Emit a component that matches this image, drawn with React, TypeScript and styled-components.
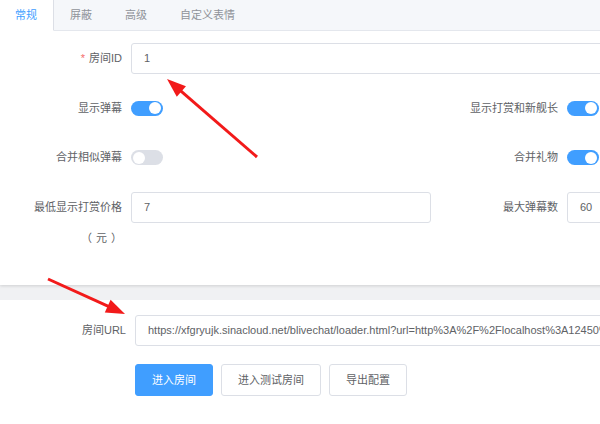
import React from "react";
import styled, { createGlobalStyle } from "styled-components";

const GlobalStyle = createGlobalStyle`
  html, body {
    margin: 0;
    padding: 0;
    overflow: hidden;
    background: #f0f1f3;
  }
  body {
    font-family: "Liberation Sans", "Noto Sans CJK SC", sans-serif;
    font-size: 11px;
    color: #606266;
  }
`;

const Page = styled.div`
  position: relative;
  width: 880px;
  min-height: 100vh;
  display: flex;
  flex-direction: column;
`;

const Card = styled.div`
  background: #fff;
  box-shadow: 0 1px 3px rgba(0, 0, 0, 0.14);
`;

const TabHeader = styled.div`
  height: 30px;
  display: flex;
  background: #f5f7fa;
  border-bottom: 1px solid #e4e7ed;
  margin-left: -2px;
`;

const Tab = styled.div<{ $active?: boolean }>`
  height: 30px;
  line-height: 30px;
  padding: 0 16px;
  border-left: 1px solid ${({ $active }) => ($active ? "#dcdfe6" : "transparent")};
  border-right: 1px solid ${({ $active }) => ($active ? "#dcdfe6" : "transparent")};
  background: ${({ $active }) => ($active ? "#fff" : "transparent")};
  color: ${({ $active }) => ($active ? "#409eff" : "#909399")};
  margin-bottom: -1px;
  border-bottom: 1px solid ${({ $active }) => ($active ? "#fff" : "transparent")};
  & + & {
    margin-left: -1px;
  }
`;

const FormBody = styled.div`
  padding: 12px 0 13px;
`;

const Row = styled.div`
  display: flex;
`;

const Col = styled.div`
  width: 436px;
  box-sizing: border-box;
  padding: 0 5px 0 22px;
`;

const FullCol = styled.div`
  padding: 0 5px 0 22px;
`;

const Item = styled.div<{ $last?: boolean }>`
  display: flex;
  margin-bottom: ${({ $last }) => ($last ? "18px" : "18.5px")};
`;

const Label = styled.label<{ $width?: number }>`
  width: ${({ $width }) => $width ?? 109}px;
  flex-shrink: 0;
  box-sizing: border-box;
  padding-right: 9px;
  text-align: right;
  line-height: 31px;
  color: #606266;
`;

const Unit = styled.span`
  letter-spacing: 4px;
  margin-right: -4px;
`;

const Star = styled.span`
  color: #f56c6c;
  margin-right: 4px;
`;

const Content = styled.div<{ $top?: boolean }>`
  flex: 1;
  min-height: 31px;
  display: flex;
  align-items: ${({ $top }) => ($top ? "flex-start" : "center")};
`;

const Input = styled.div`
  flex: 1;
  height: 31px;
  box-sizing: border-box;
  border: 1px solid #dcdfe6;
  border-radius: 3px;
  padding: 0 12px;
  line-height: 29px;
  color: #606266;
  white-space: nowrap;
  overflow: hidden;
  background: #fff;
`;

const Switch = styled.div<{ $on?: boolean }>`
  width: 32px;
  height: 15px;
  border-radius: 8px;
  background: ${({ $on }) => ($on ? "#409eff" : "#dcdfe6")};
  position: relative;
  &::after {
    content: "";
    position: absolute;
    top: 1.5px;
    left: ${({ $on }) => ($on ? "18px" : "2px")};
    width: 12px;
    height: 12px;
    border-radius: 50%;
    background: #fff;
  }
`;

const BottomCard = styled.div`
  flex: 1;
  background: #fff;
  margin-top: 15px;
  padding: 15px 0;
`;

const Buttons = styled.div`
  display: flex;
  gap: 8px;
`;

const Button = styled.div<{ $primary?: boolean }>`
  height: 32px;
  box-sizing: border-box;
  padding: 0 16px;
  line-height: 30px;
  border-radius: 3px;
  border: 1px solid ${({ $primary }) => ($primary ? "#409eff" : "#dcdfe6")};
  background: ${({ $primary }) => ($primary ? "#409eff" : "#fff")};
  color: ${({ $primary }) => ($primary ? "#fff" : "#606266")};
`;

const Overlay = styled.svg`
  position: absolute;
  left: 0;
  top: 0;
  pointer-events: none;
`;

type ArrowProps = { x1: number; y1: number; x2: number; y2: number };

const Arrow: React.FC<ArrowProps> = ({ x1, y1, x2, y2 }) => {
  const dx = x2 - x1;
  const dy = y2 - y1;
  const len = Math.hypot(dx, dy);
  const ux = dx / len;
  const uy = dy / len;
  const head = 19;
  const half = 7;
  const bx = x2 - ux * head;
  const by = y2 - uy * head;
  const nx = -uy;
  const ny = ux;
  const pts = `${x2},${y2} ${bx + nx * half},${by + ny * half} ${bx - nx * half},${by - ny * half}`;
  return (
    <g>
      <line x1={x1} y1={y1} x2={bx + ux * 2} y2={by + uy * 2} stroke="#f21a1a" strokeWidth={3} />
      <polygon points={pts} fill="#f21a1a" />
    </g>
  );
};

const App: React.FC = () => {
  return (
    <Page>
      <GlobalStyle />
      <Card>
        <TabHeader>
          <Tab $active>常规</Tab>
          <Tab>屏蔽</Tab>
          <Tab>高级</Tab>
          <Tab>自定义表情</Tab>
        </TabHeader>
        <FormBody>
          <FullCol>
            <Item>
              <Label>
                <Star>*</Star>房间ID
              </Label>
              <Content>
                <Input>1</Input>
              </Content>
            </Item>
          </FullCol>
          <Row>
            <Col>
              <Item>
                <Label>显示弹幕</Label>
                <Content>
                  <Switch $on />
                </Content>
              </Item>
            </Col>
            <Col>
              <Item>
                <Label>显示打赏和新舰长</Label>
                <Content>
                  <Switch $on />
                </Content>
              </Item>
            </Col>
          </Row>
          <Row>
            <Col>
              <Item>
                <Label>合并相似弹幕</Label>
                <Content>
                  <Switch />
                </Content>
              </Item>
            </Col>
            <Col>
              <Item>
                <Label>合并礼物</Label>
                <Content>
                  <Switch $on />
                </Content>
              </Item>
            </Col>
          </Row>
          <Row>
            <Col>
              <Item $last>
                <Label>
                  最低显示打赏价格<Unit>（元）</Unit>
                </Label>
                <Content $top>
                  <Input>7</Input>
                </Content>
              </Item>
            </Col>
            <Col>
              <Item $last>
                <Label>最大弹幕数</Label>
                <Content $top>
                  <Input>60</Input>
                </Content>
              </Item>
            </Col>
          </Row>
        </FormBody>
      </Card>
      <BottomCard>
        <FullCol>
          <Item>
            <Label $width={113}>房间URL</Label>
            <Content>
              <Input>
                https://xfgryujk.sinacloud.net/blivechat/loader.html?url=http%3A%2F%2Flocalhost%3A12450%2Froom%2F1
              </Input>
            </Content>
          </Item>
          <Item>
            <Label $width={113} />
            <Buttons>
              <Button $primary>进入房间</Button>
              <Button>进入测试房间</Button>
              <Button>导出配置</Button>
            </Buttons>
          </Item>
        </FullCol>
      </BottomCard>
      <Overlay width={600} height={424}>
        <Arrow x1={257} y1={157} x2={167} y2={79} />
        <Arrow x1={48} y1={279} x2={125} y2={314} />
      </Overlay>
    </Page>
  );
};

export default App;
